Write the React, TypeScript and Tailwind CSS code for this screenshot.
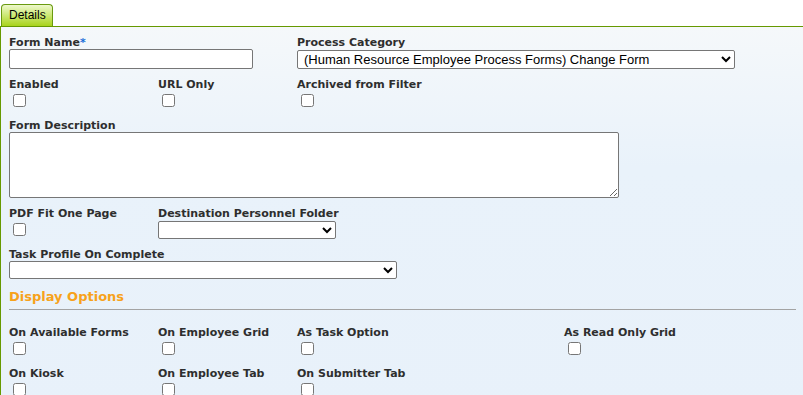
import React from "react";

const label = "block h-[13px] text-[11px] leading-[13px] font-bold text-[#2e2e2e] whitespace-nowrap";
const check = "block h-[13px] w-[13px] mt-[3px] mb-[3px] ml-[4px]";
const field =
  "block border border-[#767676] rounded-[2px] bg-white text-[13px] text-black font-['Liberation_Sans',Arial,sans-serif]";

function CheckField({ text, width }: { text: string; width?: string }) {
  return (
    <div className={width}>
      <span className={label}>{text}</span>
      <input type="checkbox" className={check} />
    </div>
  );
}

export default function App() {
  return (
    <div className="w-[803px] h-[395px] overflow-hidden bg-white font-['DejaVu_Sans',Tahoma,sans-serif]">
      <div className="flex pt-[4px] pl-[1px]">
        <div className="h-[22px] w-[52px] rounded-t-[4px] border border-b-0 border-[#6a9a10] bg-[linear-gradient(to_bottom,#eef8cc,#c8e66a_55%,#a9d31c)] pl-[7px] pt-[3px] text-[12px] leading-[14px] text-black font-['Liberation_Sans',Arial,sans-serif]">
          Details
        </div>
      </div>
      <div className="h-[400px] border-t border-l border-[#669900] bg-[linear-gradient(to_bottom,#f5f8fa,#e9f2fa_140px,#e8f1fa)] pl-[8px] pt-[9px]">
        <div className="flex">
          <div className="w-[288px]">
            <span className={label}>
              Form Name<span className="text-[#1a6ed8]">*</span>
            </span>
            <input type="text" className={`${field} h-[20px] w-[244px] px-[2px]`} />
          </div>
          <div>
            <span className={label}>Process Category</span>
            <select className={`${field} mt-px h-[19px] w-[438px] pl-[2px]`}>
              <option>(Human Resource Employee Process Forms) Change Form</option>
            </select>
          </div>
        </div>

        <div className="mt-[9px] flex">
          <CheckField text="Enabled" width="w-[149px]" />
          <CheckField text="URL Only" width="w-[139px]" />
          <CheckField text="Archived from Filter" />
        </div>

        <div className="mt-[9px]">
          <span className={label}>Form Description</span>
          <textarea className={`${field} h-[66px] w-[610px] resize`} />
        </div>

        <div className="mt-[9px] flex">
          <CheckField text="PDF Fit One Page" width="w-[149px]" />
          <div>
            <span className={label}>Destination Personnel Folder</span>
            <select className={`${field} mt-px h-[18px] w-[178px]`}>
              <option></option>
            </select>
          </div>
        </div>

        <div className="mt-[9px]">
          <span className={label}>Task Profile On Complete</span>
          <select className={`${field} h-[18px] w-[388px]`}>
            <option></option>
          </select>
        </div>

        <div className="mt-[10px] h-[16px] text-[13px] leading-[16px] font-bold text-[#f7a21b]">
          Display Options
        </div>
        <div className="mt-[4px] mr-[7px] border-t border-[#a3a3a3]" />

        <div className="mt-[16px] flex">
          <CheckField text="On Available Forms" width="w-[149px]" />
          <CheckField text="On Employee Grid" width="w-[139px]" />
          <CheckField text="As Task Option" width="w-[267px]" />
          <CheckField text="As Read Only Grid" />
        </div>

        <div className="mt-[9px] flex">
          <CheckField text="On Kiosk" width="w-[149px]" />
          <CheckField text="On Employee Tab" width="w-[139px]" />
          <CheckField text="On Submitter Tab" width="w-[267px]" />
        </div>
      </div>
    </div>
  );
}
